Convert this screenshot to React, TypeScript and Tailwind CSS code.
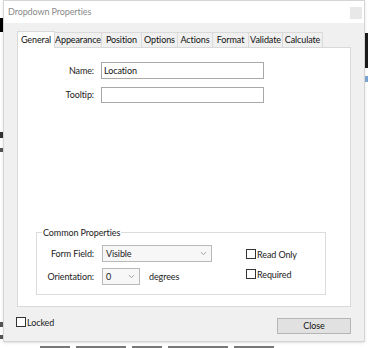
import { ChevronDown } from "lucide-react";

const font = { fontFamily: 'Lato, "Noto Sans", sans-serif' };

const tabs = [
  { label: "General", w: "w-[38px]" },
  { label: "Appearance", w: "w-[48px]" },
  { label: "Position", w: "w-[41px]" },
  { label: "Options", w: "w-[37px]" },
  { label: "Actions", w: "w-[36px]" },
  { label: "Format", w: "w-[37px]" },
  { label: "Validate", w: "w-[35px]" },
  { label: "Calculate", w: "w-[41px]" },
];

const Check = ({ label }: { label: string }) => (
  <div className="flex items-center gap-[1px]">
    <span className="h-[10px] w-[10px] border border-[#333] bg-white" />
    <span className="text-[9px] leading-none text-[#222]">{label}</span>
  </div>
);

const Select = ({ value, w }: { value: string; w: string }) => (
  <div className={`flex h-[17px] ${w} items-center border border-[#b9b9b9] bg-[#f7f7f7]`}>
    <span className="flex-1 pl-[3px] text-[9px] text-[#222]">{value}</span>
    <ChevronDown className="mr-[3px] h-[9px] w-[9px] text-[#666]" strokeWidth={1.5} />
  </div>
);

export default function App() {
  return (
    <div className="flex h-[348px] w-[368px] flex-col bg-white tracking-[-0.1px]" style={font}>
      <div className="flex h-[342px]">
        <div className="flex w-[3px] flex-col">
          <div className="mt-[18px] h-[14px] bg-black" />
          <div className="mt-[100px] h-[6px] bg-[#333]" />
          <div className="mt-[10px] h-[4px] bg-[#555]" />
          <div className="mt-[170px] h-[5px] bg-[#555]" />
          <div className="mt-[8px] h-[4px] bg-[#555]" />
        </div>
        <div className="flex w-[362px] flex-col border border-[#d5d5d5] bg-[#f0f0f0] shadow-sm">
          <div className="flex h-[22px] items-center justify-between bg-white pl-[4px] pr-[2px]">
            <span className="text-[9px] text-[#8a8a8a]">Dropdown Properties</span>
            <div className="mt-[2px] h-[12px] w-[12px] bg-[#e8e8e8]" />
          </div>
          <div className="flex flex-col px-[13px] pt-[8px]">
            <div className="flex h-[16px] items-end">
              {tabs.map((t, i) => (
                <div
                  key={t.label}
                  className={
                    i === 0
                      ? `${t.w} relative z-10 -mb-px flex h-[17px] items-center justify-center border border-b-0 border-[#d9d9d9] bg-white text-[9px] text-[#111]`
                      : `${t.w} -ml-px flex h-[15px] items-center justify-center border border-b-0 border-[#dadada] bg-[#f0f0f0] text-[9px] text-[#111]`
                  }
                >
                  {t.label}
                </div>
              ))}
            </div>
            <div className="flex h-[260px] flex-col border border-[#d9d9d9] bg-white">
              <div className="mt-[14px] grid grid-cols-[76px_163px] items-center gap-x-[7px] gap-y-[8px]">
                <span className="text-right text-[9px] text-[#222]">Name:</span>
                <div className="flex h-[17px] items-center border border-[#a8a8a8] pl-[2px] text-[9px] text-[#111]">
                  Location
                </div>
                <span className="text-right text-[9px] text-[#222]">Tooltip:</span>
                <div className="h-[16px] border border-[#a8a8a8]" />
              </div>
              <fieldset className="ml-[18px] mt-[125px] h-[67px] w-[290px] border border-[#dcdcdc] px-[4px]">
                <legend className="ml-[1px] px-[1px] text-[9px] leading-none text-[#222]">Common Properties</legend>
                <div className="mt-[8px] flex">
                  <div className="grid grid-cols-[53px_auto] items-center gap-x-[8px] gap-y-[6px]">
                    <span className="text-right text-[9px] text-[#222]">Form Field:</span>
                    <Select value="Visible" w="w-[110px]" />
                    <span className="text-right text-[9px] text-[#222]">Orientation:</span>
                    <div className="flex items-center gap-[9px]">
                      <Select value="0" w="w-[38px]" />
                      <span className="text-[9px] text-[#222]">degrees</span>
                    </div>
                  </div>
                  <div className="ml-[34px] mt-[4px] flex flex-col gap-[10px]">
                    <Check label="Read Only" />
                    <Check label="Required" />
                  </div>
                </div>
              </fieldset>
            </div>
            <div className="mt-[11px] flex items-start justify-between">
              <div className="-ml-[1px] mt-[-1px]">
                <Check label="Locked" />
              </div>
              <div className="flex h-[16px] w-[74px] items-center justify-center border border-[#b5b5b5] bg-[#e1e1e1] text-[9px] text-[#111]">
                Close
              </div>
            </div>
          </div>
        </div>
        <div className="flex w-[3px] flex-col">
          <div className="mt-[33px] h-[35px] bg-[#1a1a1a]" />
          <div className="mt-[8px] h-[6px] bg-[#7aa3d0]" />
        </div>
      </div>
      <div className="flex h-[6px] items-end gap-[6px] pl-[40px]">
        <div className="h-[2px] w-[30px] bg-[#777]" />
        <div className="h-[2px] w-[50px] bg-[#777]" />
        <div className="h-[2px] w-[30px] bg-[#777]" />
        <div className="h-[2px] w-[60px] bg-[#777]" />
        <div className="h-[2px] w-[40px] bg-[#777]" />
      </div>
    </div>
  );
}
